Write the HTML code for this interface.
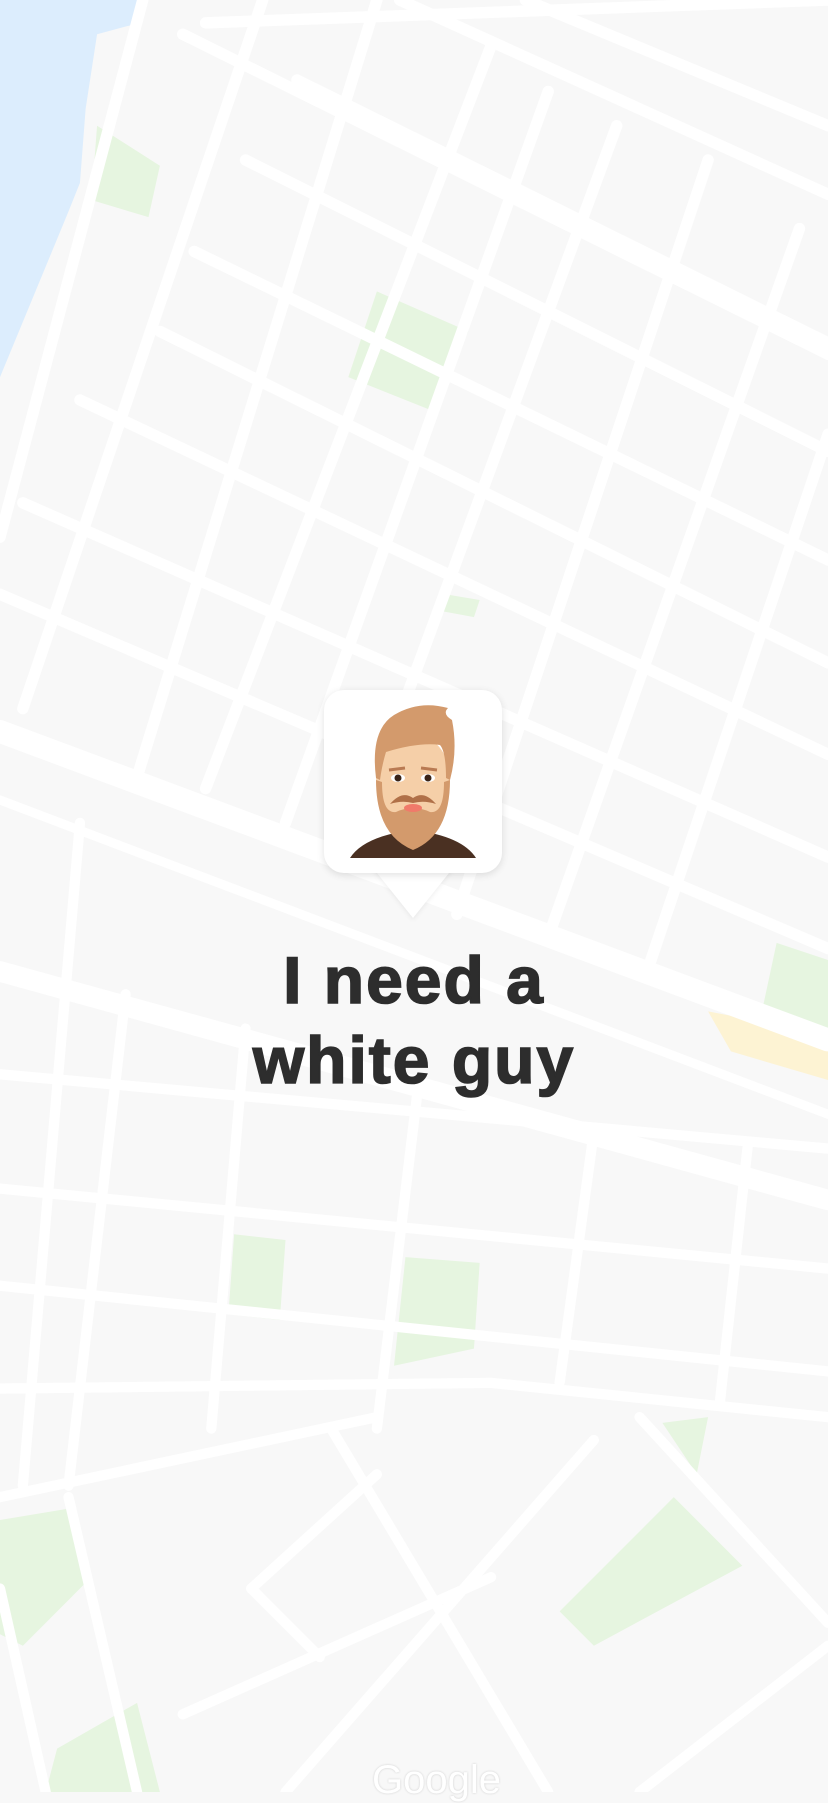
<!DOCTYPE html>
<html><head><meta charset="utf-8"><style>
html,body{margin:0;padding:0;width:828px;height:1792px;overflow:hidden;background:#f8f8f8;}
#map{position:absolute;left:0;top:0;width:828px;height:1792px;}
.bubble{position:absolute;left:324px;top:690px;width:178px;height:183px;background:#fff;border-radius:20px;box-shadow:0 2px 8px rgba(0,0,0,.12);}
.tip{position:absolute;left:373px;top:868px;width:0;height:0;border-left:40px solid transparent;border-right:40px solid transparent;border-top:50px solid #fff;filter:drop-shadow(0 2px 2px rgba(0,0,0,.06));}
.title{position:absolute;left:0;width:828px;top:940px;text-align:center;font-family:"Liberation Sans",sans-serif;font-weight:bold;font-size:66px;line-height:80px;color:#2d2d2d;letter-spacing:2px;-webkit-text-stroke:1.6px #2d2d2d;}
.g{position:absolute;left:372px;top:1758px;font-family:"Liberation Sans",sans-serif;font-size:40px;color:#fff;text-shadow:0 0 2px #ccc;}
</style></head><body>
<svg id="map" viewBox="0 0 725 1568" preserveAspectRatio="none">
<rect width="725" height="1568" fill="#f8f8f8"/>
<polygon points="0,0 125,0 122,20 85,30 75,95 70,160 60,185 0,330" fill="#dcedfd"/>
<g fill="#e6f5e0">
<polygon points="85,110 140,145 130,190 80,175"/>
<polygon points="330,255 410,290 380,360 305,330"/>
<polygon points="390,520 420,525 415,540 388,535"/>
<polygon points="680,825 725,840 725,900 665,895"/>
<polygon points="205,1080 250,1085 245,1155 200,1150"/>
<polygon points="355,1100 420,1105 415,1180 345,1195"/>
<polygon points="490,1410 590,1310 650,1370 520,1440"/>
<polygon points="0,1330 60,1320 80,1380 20,1440 0,1430"/>
<polygon points="50,1530 120,1490 140,1568 40,1568"/>
<polygon points="580,1245 620,1240 610,1290"/>
</g>
<polygon points="620,885 725,905 725,945 640,920" fill="#fdf3d3"/>
<g stroke="#fff" stroke-width="10" fill="none" stroke-linecap="round">
<line x1="160" y1="30" x2="725" y2="310"/>
<line x1="260" y1="70" x2="725" y2="300"/>
<line x1="215" y1="140" x2="725" y2="395"/>
<line x1="170" y1="220" x2="725" y2="490"/>
<line x1="140" y1="290" x2="725" y2="580"/>
<line x1="70" y1="350" x2="725" y2="660"/>
<line x1="20" y1="440" x2="725" y2="750"/>
<line x1="0" y1="520" x2="725" y2="830"/>
<line x1="350" y1="0" x2="725" y2="170"/>
<line x1="460" y1="0" x2="725" y2="110"/>
<line x1="125" y1="0" x2="0" y2="470"/>
<line x1="230" y1="0" x2="20" y2="620"/>
<line x1="330" y1="0" x2="120" y2="680"/>
<line x1="430" y1="40" x2="180" y2="690"/>
<line x1="480" y1="80" x2="250" y2="720"/>
<line x1="540" y1="110" x2="330" y2="680"/>
<line x1="620" y1="140" x2="400" y2="800"/>
<line x1="700" y1="200" x2="480" y2="820"/>
<line x1="725" y1="380" x2="570" y2="840"/>
<line x1="180" y1="20" x2="725" y2="0"/>
</g>
<g stroke="#fff" fill="none" stroke-linecap="round">
<line x1="0" y1="640" x2="725" y2="910" stroke-width="20"/>
<line x1="0" y1="850" x2="725" y2="1050" stroke-width="18"/>
<line x1="0" y1="700" x2="725" y2="975" stroke-width="8"/>
</g>
<g stroke="#fff" stroke-width="9" fill="none" stroke-linecap="round">
<line x1="0" y1="940" x2="725" y2="1005"/>
<line x1="0" y1="1040" x2="725" y2="1110"/>
<line x1="0" y1="1125" x2="725" y2="1200"/>
<line x1="0" y1="1215" x2="430" y2="1210"/>
<line x1="430" y1="1210" x2="725" y2="1240"/>
<line x1="0" y1="1310" x2="330" y2="1240"/>
<line x1="70" y1="720" x2="20" y2="1300"/>
<line x1="110" y1="870" x2="60" y2="1300"/>
<line x1="215" y1="900" x2="185" y2="1250"/>
<line x1="365" y1="960" x2="330" y2="1250"/>
<line x1="520" y1="990" x2="490" y2="1210"/>
<line x1="655" y1="1000" x2="630" y2="1230"/>
<line x1="290" y1="1250" x2="480" y2="1568"/>
<line x1="560" y1="1240" x2="725" y2="1420"/>
<line x1="60" y1="1310" x2="120" y2="1568"/>
<line x1="0" y1="1390" x2="40" y2="1568"/>
<line x1="220" y1="1390" x2="330" y2="1290"/>
<line x1="220" y1="1390" x2="280" y2="1450"/>
<line x1="520" y1="1260" x2="250" y2="1568"/>
<line x1="725" y1="1440" x2="560" y2="1568"/>
<line x1="160" y1="1500" x2="430" y2="1380"/>
</g>
</svg>
<div class="tip"></div>
<div class="bubble">
<svg width="178" height="183" viewBox="0 0 178 183">
<path d="M26 168 Q40 146 89 140 Q138 146 152 168 Z" fill="#4a3022"/>
<ellipse cx="89" cy="88" rx="37" ry="44" fill="#f5cfa8"/>
<path d="M52 88 Q46 40 70 25 Q95 10 124 18 Q118 24 128 30 Q134 60 126 90 L122 88 Q122 62 116 55 Q95 52 62 62 Q58 75 56 90 Z" fill="#d39a6c"/>
<path d="M52 90 Q52 145 89 160 Q126 145 126 90 L120 92 Q120 124 106 122 Q89 114 72 122 Q58 124 58 92 Z" fill="#d39a6c"/>
<path d="M66 114 Q78 100 89 108 Q100 100 112 114 Q100 110 89 113 Q78 110 66 114Z" fill="#b07048"/>
<ellipse cx="89" cy="118" rx="9" ry="4" fill="#f07a6a"/>
<ellipse cx="74" cy="88" rx="7" ry="4" fill="#fff"/>
<ellipse cx="104" cy="88" rx="7" ry="4" fill="#fff"/>
<circle cx="74" cy="88" r="3.5" fill="#3a2418"/>
<circle cx="104" cy="88" r="3.5" fill="#3a2418"/>
<path d="M65 80 L81 78 M97 78 L113 80" stroke="#b97a52" stroke-width="3"/>
</svg>
</div>
<div class="title">I need a<br>white guy</div>
<div class="g">Google</div>
</body></html>
